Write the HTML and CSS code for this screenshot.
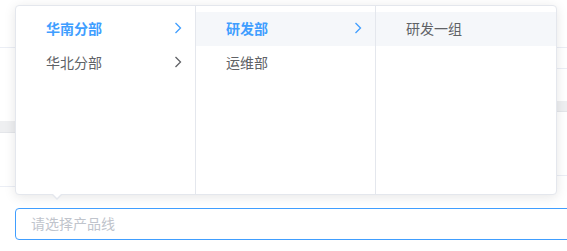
FILE: index.html
```html
<!DOCTYPE html>
<html lang="zh-CN">
<head>
<meta charset="utf-8">
<link rel="stylesheet" href="styles.css">
</head>
<body>
<div class="page">
  <div class="bg">
    <div class="bg-left">
      <div class="gap g48"></div>
      <div class="gap g72"></div>
      <div class="band b12"></div>
      <div class="gap g54"></div>
    </div>
    <div class="bg-mid"></div>
    <div class="bg-right">
      <div class="gap g48"></div>
      <div class="gap g21"></div>
      <div class="gap g32"></div>
      <div class="band b11 plain"></div>
      <div class="gap g64"></div>
    </div>
  </div>
  <div class="field">
    <div class="input"><span class="ph">请选择产品线</span></div>
  </div>

  <div class="popper">
    <div class="panel">
      <div class="menu">
        <div class="node active"><span class="label">华南分部</span>
          <svg class="chev" width="8" height="12" viewBox="0 0 8 12"><polyline points="1.5,1 6.5,6 1.5,11" fill="none" stroke="currentColor" stroke-width="1.3"/></svg>
        </div>
        <div class="node"><span class="label">华北分部</span>
          <svg class="chev" width="8" height="12" viewBox="0 0 8 12"><polyline points="1.5,1 6.5,6 1.5,11" fill="none" stroke="currentColor" stroke-width="1.3"/></svg>
        </div>
      </div>
      <div class="menu">
        <div class="node active hl"><span class="label">研发部</span>
          <svg class="chev" width="8" height="12" viewBox="0 0 8 12"><polyline points="1.5,1 6.5,6 1.5,11" fill="none" stroke="currentColor" stroke-width="1.3"/></svg>
        </div>
        <div class="node"><span class="label">运维部</span></div>
      </div>
      <div class="menu last">
        <div class="node hl"><span class="label">研发一组</span></div>
      </div>
    </div>
    <div class="arrow"></div>
  </div>
</div>
</body>
</html>
```

FILE: styles.css
```css
html, body {
  margin: 0;
  padding: 0;
  background: #fff;
  font-family: "Noto Sans CJK SC", "Noto Sans", sans-serif;
  font-size: 14px;
  color: #606266;
}

.page {
  position: relative;
  width: 567px;
  height: 251px;
  overflow: hidden;
}

.bg {
  display: flex;
  height: 208px;
}
.bg-left { width: 15px; }
.bg-mid { flex: 1; }
.bg-right { width: 11px; }

.gap { border-bottom: 1px solid #EBEEF5; box-sizing: border-box; }
.g48 { height: 48px; }
.g72 { height: 73px; border-bottom: none; }
.g21 { height: 21px; }
.g32 { height: 32px; border-bottom: none; }
.g54 { height: 54px; }
.g64 { height: 64px; }
.band { background: #EEEFF1; border-bottom: 1px solid #E4E6EA; box-sizing: border-box; }
.b12 { height: 12px; }
.b11 { height: 11px; }

.field {
  padding-left: 15px;
}
.input {
  width: 600px;
  height: 32px;
  box-sizing: border-box;
  border: 1px solid #409EFF;
  border-radius: 4px;
  padding-left: 15px;
  line-height: 30px;
  color: #C0C4CC;
}
.ph {
  position: relative;
  top: -1px;
}

.popper {
  position: absolute;
  left: 15px;
  top: 5px;
}
.panel {
  display: flex;
  height: 190px;
  box-sizing: border-box;
  border: 1px solid #E4E7ED;
  border-radius: 4px;
  background: #fff;
  box-shadow: 0 2px 12px 0 rgba(0, 0, 0, 0.1);
  overflow: hidden;
}
.menu {
  width: 180px;
  box-sizing: border-box;
  border-right: 1px solid #E4E7ED;
  padding: 6px 0;
}
.menu.last { border-right: none; }

.node {
  position: relative;
  height: 34px;
  line-height: 34px;
  padding: 0 30px 0 30px;
  color: #606266;
}
.label {
  position: relative;
  top: -1px;
}
.node.hl { background: #F5F7FA; }
.node.active { color: #409EFF; font-weight: 700; }
.chev {
  position: absolute;
  right: 13px;
  top: 10px;
  color: #606266;
}
.node.active .chev { color: #409EFF; }

.arrow {
  position: absolute;
  left: 36px;
  top: 189px;
  width: 0;
  height: 0;
  border-left: 6px solid transparent;
  border-right: 6px solid transparent;
  border-top: 6px solid #E4E7ED;
}
.arrow::after {
  content: "";
  position: absolute;
  left: -5px;
  top: -7px;
  border-left: 5px solid transparent;
  border-right: 5px solid transparent;
  border-top: 5px solid #fff;
}
```
